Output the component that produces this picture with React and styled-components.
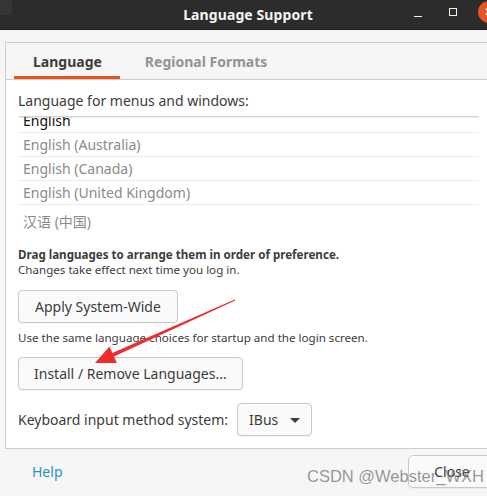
import React from 'react'
import styled, { createGlobalStyle } from 'styled-components'

const Global = createGlobalStyle`
  html, body {
    margin: 0;
    padding: 0;
    width: 487px;
    height: 496px;
    overflow: hidden;
    background: #f6f6f6;
  }
  * { box-sizing: border-box; }
`

const Window = styled.div`
  position: relative;
  width: 496px;
  height: 496px;
  background: #f6f6f6;
  font-family: "Noto Sans", "Noto Sans CJK SC", sans-serif;
  color: #3c3c3c;
  display: flex;
  flex-direction: column;
`

const TitleBar = styled.div`
  position: relative;
  height: 30px;
  background: #2c2c2c;
  display: grid;
  grid-template-columns: 1fr auto 1fr;
  align-items: center;
  border-bottom: 1px solid #1f1f1f;
  &::before {
    content: "";
    position: absolute;
    left: 0;
    top: 0;
    width: 12px;
    height: 15px;
    background: #363636;
    border-bottom-right-radius: 4px;
  }
`

const Title = styled.div`
  grid-column: 2;
  color: #f5f5f5;
  font-weight: 700;
  font-size: 14px;
  letter-spacing: 0.1px;
`

const Controls = styled.div`
  grid-column: 3;
  justify-self: end;
  display: flex;
  align-items: center;
  height: 100%;
`

const Minimize = styled.div`
  width: 8px;
  height: 1.5px;
  background: #f0f0f0;
  margin-top: 4px;
  margin-right: 27px;
`

const Maximize = styled.div`
  width: 8px;
  height: 8px;
  border: 1.3px solid #f0f0f0;
  margin-bottom: 6px;
  margin-right: 21px;
`

const CloseDot = styled.div`
  width: 22px;
  height: 22px;
  border-radius: 50%;
  background: #e9541f;
  color: #fff;
  font-size: 12px;
  line-height: 22px;
  text-align: center;
  margin-bottom: 6px;
  margin-right: -4px;
`

const Frame = styled.div`
  margin: 12px 4px 0 5px;
  border: 1px solid #cdcdcd;
  display: flex;
  flex-direction: column;
`

const TabBar = styled.div`
  height: 37px;
  display: flex;
  gap: 6px;
  padding-left: 8px;
  border-bottom: 1px solid #cdcdcd;
  background: #f6f6f6;
`

const Tab = styled.div`
  display: flex;
  align-items: center;
  padding: 3px 18px 0 19px;
  font-size: 14px;
  font-weight: 700;
  color: ${p => (p.active ? '#3c3c3c' : '#939393')};
  border-bottom: 3px solid ${p => (p.active ? '#e9541f' : 'transparent')};
`

const Content = styled.div`
  background: #ffffff;
  padding: 11px 12px 12px 12px;
  display: flex;
  flex-direction: column;
  align-items: flex-start;
`

const Label = styled.div`
  font-size: 14px;
  line-height: 20px;
  color: #3c3c3c;
`

const List = styled.div`
  align-self: stretch;
  margin: 5px 0 0 1px;
  height: 119px;
  overflow: hidden;
  border-top: 1px solid #d2d2d2;
  box-shadow: inset 0 1px 0 #ececec;
`

const Rows = styled.div`
  margin-top: -8px;
`

const Row = styled.div`
  height: 24px;
  padding-left: 4px;
  display: flex;
  align-items: center;
  font-size: 14px;
  color: ${p => (p.selected ? '#111111' : '#8a8a8a')};
  border-bottom: 1px solid #eeeeee;
  ${p => p.last && 'height: 31px; border-bottom: none;'}
`

const Hint = styled.div`
  font-size: 11.6px;
  line-height: 15px;
  color: #3c3c3c;
  font-weight: ${p => (p.bold ? 700 : 400)};
  margin-top: ${p => p.top || 0}px;
`

const Button = styled.div`
  margin-top: ${p => p.top || 0}px;
  height: 33px;
  padding: 0 ${p => p.pad || 16}px;
  display: flex;
  align-items: center;
  justify-content: center;
  font-size: 14px;
  color: #3c3c3c;
  background: #fafafa;
  border: 1px solid #c8c8c8;
  border-radius: 4px;
  box-shadow: 0 1px 0 rgba(0, 0, 0, 0.04);
`

const KeyboardRow = styled.div`
  margin-top: 13px;
  display: flex;
  align-items: center;
  gap: 9px;
`

const Caret = styled.span`
  width: 0;
  height: 0;
  border-left: 5px solid transparent;
  border-right: 5px solid transparent;
  border-top: 5px solid #3c3c3c;
  margin-left: 12px;
  margin-top: 2px;
`

const Actions = styled.div`
  flex: 1;
  display: flex;
  align-items: flex-start;
  justify-content: space-between;
  padding: 6px 0 0 32px;
`

const Help = styled.div`
  margin-top: 7px;
  font-size: 14px;
  color: #2693cc;
`

const CloseButton = styled(Button)`
  width: 88px;
  border-radius: 5px;
`

const Watermark = styled.div`
  position: absolute;
  left: 307px;
  top: 467px;
  font-family: "Liberation Sans", Arial, sans-serif;
  font-size: 16.5px;
  color: rgba(110, 110, 110, 0.72);
  white-space: nowrap;
  pointer-events: none;
`

const Arrow = styled.svg`
  position: absolute;
  left: 0;
  top: 0;
  pointer-events: none;
`

const languages = ['English (Australia)', 'English (Canada)', 'English (United Kingdom)']

export default function App() {
  return (
    <Window>
      <Global />
      <TitleBar>
        <Title>Language Support</Title>
        <Controls>
          <Minimize />
          <Maximize />
          <CloseDot>✕</CloseDot>
        </Controls>
      </TitleBar>

      <Frame>
        <TabBar>
          <Tab active>Language</Tab>
          <Tab>Regional Formats</Tab>
        </TabBar>
        <Content>
          <Label>Language for menus and windows:</Label>
          <List>
            <Rows>
              <Row selected>English</Row>
              {languages.map(l => (
                <Row key={l}>{l}</Row>
              ))}
              <Row last>汉语 (中国)</Row>
            </Rows>
          </List>
          <Hint bold top={12}>Drag languages to arrange them in order of preference.</Hint>
          <Hint>Changes take effect next time you log in.</Hint>
          <Button top={13} pad={16}>Apply System-Wide</Button>
          <Hint top={7}>Use the same language choices for startup and the login screen.</Hint>
          <Button top={12} pad={15}>Install / Remove Languages...</Button>
          <KeyboardRow>
            <Label>Keyboard input method system:</Label>
            <Button pad={11}>
              IBus
              <Caret />
            </Button>
          </KeyboardRow>
        </Content>
      </Frame>

      <Actions>
        <Help>Help</Help>
        <CloseButton>Close</CloseButton>
      </Actions>

      <Watermark>CSDN @Webster_WXH</Watermark>

      <Arrow width="487" height="496" viewBox="0 0 487 496">
        <polygon
          fill="#ef2b2b"
          points="235.2,300.4 114.0,356.6 116.9,363.0 95,363 109.5,346.6 112.4,353.0 234.8,299.6"
        />
      </Arrow>
    </Window>
  )
}
